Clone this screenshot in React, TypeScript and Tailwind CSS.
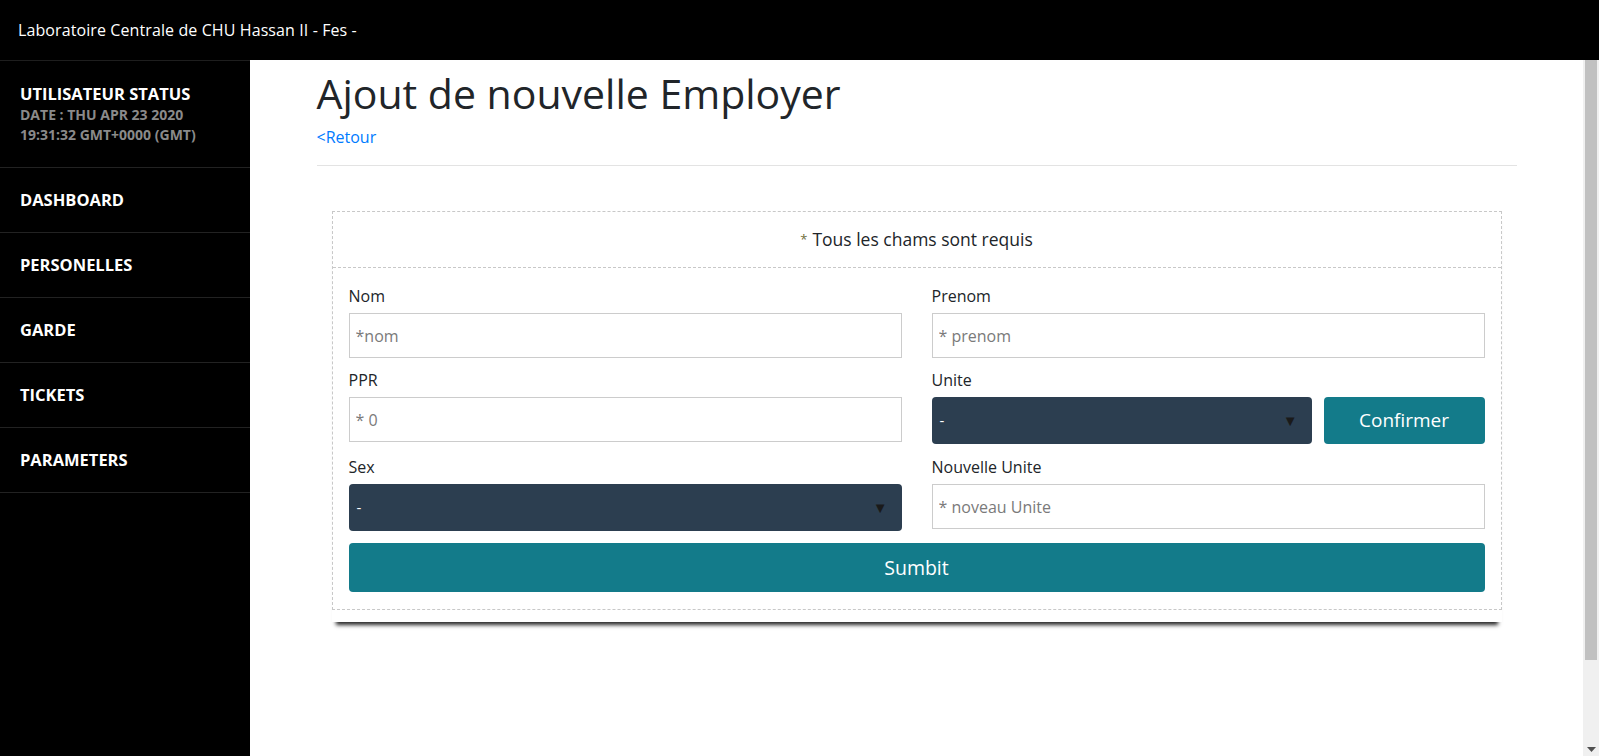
import React from "react";

const font = { fontFamily: '"Open Sans", "Noto Sans", Arial, sans-serif' };

const menu = ["DASHBOARD", "PERSONELLES", "GARDE", "TICKETS", "PARAMETERS"];

const Field: React.FC<{ label: string; placeholder: string; className?: string }> = ({
  label,
  placeholder,
  className,
}) => (
  <div className={"flex flex-col " + (className || "")}>
    <label className="text-[16px] leading-6 text-[#212529]">{label}</label>
    <input
      className="mt-[5px] h-[45px] w-full border border-[#cccccc] px-[6px] text-[16px] text-[#495057] outline-none placeholder:text-[#7a7a7a]"
      placeholder={placeholder}
    />
  </div>
);

const Select: React.FC<{ className?: string }> = ({ className }) => (
  <div
    className={
      "flex h-[47px] items-center justify-between rounded-[4px] bg-[#2c3e50] pl-[8px] pr-[14px] text-white " +
      (className || "")
    }
  >
    <span className="text-[15px]">-</span>
    <span className="text-[15px] text-[#1a1a1a]">▼</span>
  </div>
);

export default function App() {
  return (
    <div className="flex h-[756px] flex-col overflow-hidden bg-white" style={font}>
      <header className="flex h-[60px] shrink-0 items-center bg-black pl-[18px] text-[16px] tracking-[0.1px] text-white">
        Laboratoire Centrale de CHU Hassan II - Fes -
      </header>
      <div className="flex min-h-0 flex-1">
        <aside className="w-[250px] shrink-0 border-t border-[#1e1e1e] bg-black">
          <div className="h-[107px] border-b border-[#222] px-5 pt-[21px]">
            <div className="text-[16.5px] font-bold leading-[23px] text-white">UTILISATEUR STATUS</div>
            <div className="text-[14px] font-bold leading-[20px] text-[#8a8a8a]">
              DATE : THU APR 23 2020
              <br />
              19:31:32 GMT+0000 (GMT)
            </div>
          </div>
          {menu.map((m) => (
            <div
              key={m}
              className="flex h-[65px] items-center border-b border-[#222] px-5 text-[16.5px] font-bold text-white"
            >
              {m}
            </div>
          ))}
        </aside>
        <main className="min-w-0 flex-1">
          <div className="mx-auto w-[1200px]">
            <h1 className="mt-[9px] text-[41px] leading-[48px] text-[#212529]">Ajout de nouvelle Employer</h1>
            <a className="mt-[8px] block text-[16px] leading-6 text-[#007bff]">&lt;Retour</a>
            <hr className="mt-4 border-t border-[#e3e3e3]" />
            <div className="mx-[15px] mt-[45px] pb-[12px] shadow-[0_7px_4px_-4px_rgba(0,0,0,0.85)]">
              <div className="border border-dashed border-[#c8c8c8]">
                <div className="flex h-[56px] items-center justify-center border-b border-dashed border-[#c8c8c8] text-[17.5px] text-[#212529]">
                  <span className="mr-[5px] text-[13px] text-[#6e6e3a]">*</span>Tous les chams sont requis
                </div>
                <div className="px-4 pb-[17px] pt-[16px]">
                  <div className="grid grid-cols-2 gap-x-[30px] gap-y-[10px]">
                    <Field label="Nom" placeholder="*nom" />
                    <Field label="Prenom" placeholder="* prenom" />
                    <Field label="PPR" placeholder="* 0" />
                    <div className="flex flex-col">
                      <label className="text-[16px] leading-6 text-[#212529]">Unite</label>
                      <div className="mt-[5px] flex gap-[12px]">
                        <Select className="flex-1" />
                        <button className="h-[47px] w-[161px] rounded-[4px] bg-[#137b8a] text-[19px] text-white">
                          Confirmer
                        </button>
                      </div>
                    </div>
                    <div className="mt-[1px] flex flex-col">
                      <label className="text-[16px] leading-6 text-[#212529]">Sex</label>
                      <Select className="mt-[5px]" />
                    </div>
                    <Field label="Nouvelle Unite" placeholder="* noveau Unite" className="mt-[1px]" />
                  </div>
                  <button className="mt-[12px] h-[49px] w-full rounded-[4px] bg-[#137b8a] text-[19.5px] text-white">
                    Sumbit
                  </button>
                </div>
              </div>
            </div>
          </div>
        </main>
        <div className="flex w-[16px] shrink-0 flex-col bg-[#f0f0f0]">
          <div className="mx-[2px] h-[600px] bg-[#c1c1c1]" />
          <div className="flex flex-1 items-end justify-center pb-[4px]">
            <svg width="9" height="5" viewBox="0 0 9 5">
              <path d="M0 0h9L4.5 5z" fill="#505050" />
            </svg>
          </div>
        </div>
      </div>
    </div>
  );
}
